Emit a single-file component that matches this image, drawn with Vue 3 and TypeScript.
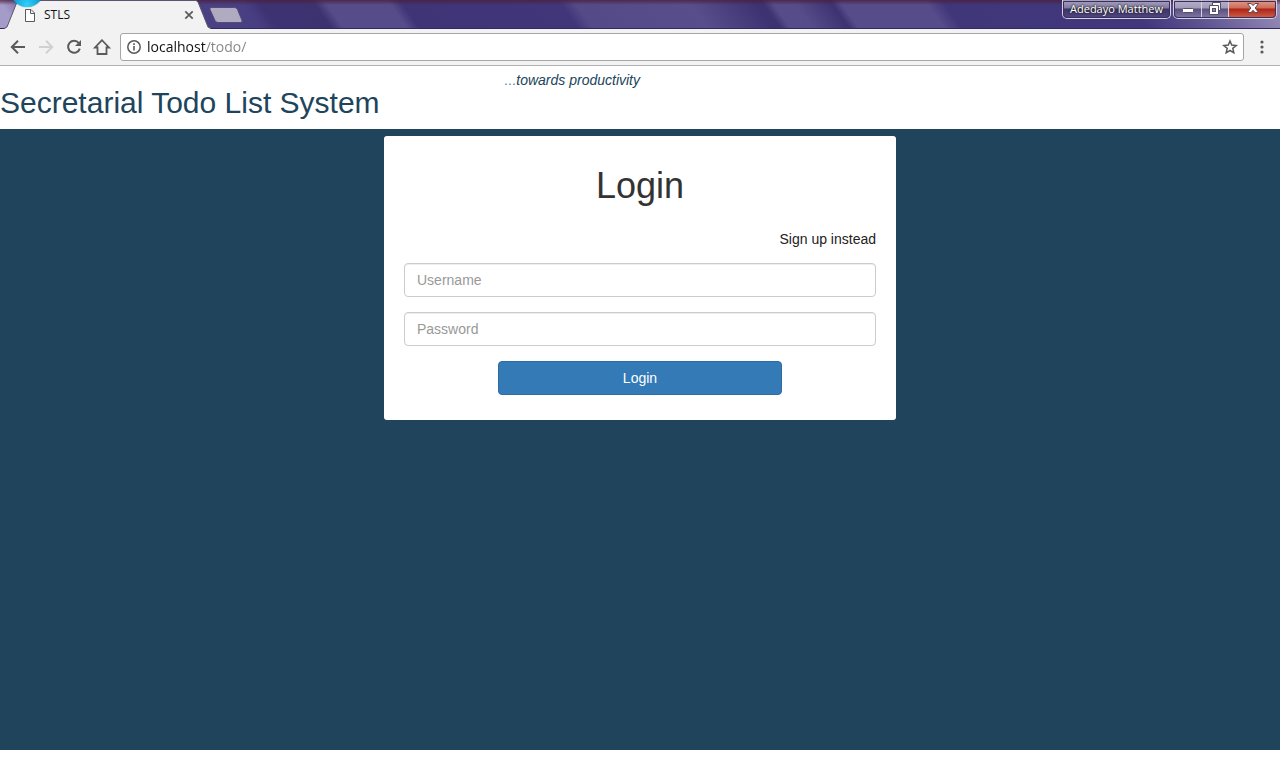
<script setup lang="ts">
import { ref } from 'vue'

const address = ref('localhost/todo/')
const username = ref('')
const password = ref('')
</script>

<template>
  <div class="window">
    <div class="titlebar">
      <div class="tab">
        <svg class="tab-shape" viewBox="0 0 208 29" preserveAspectRatio="none" aria-hidden="true">
          <path d="M0 29 L3 27 L13 2 L15 .5 H192 L194 2 L204 27 L207 29 Z" fill="#f2f2f2" />
          <path d="M0 28.500 L3 27 L13 2 L15 .5 H192 L194 2 L204 27 L207 28.500" fill="none" stroke="#5d5570" stroke-width="1" />
        </svg>
        <span class="orb"></span>
        <svg class="page-icon" width="12" height="15" viewBox="0 0 12 15" aria-hidden="true">
          <path d="M1.500 1.500 H7 L10.500 5 V13.500 H1.500 Z M6.500 1.500 V5.500 H10.500" fill="#fff" stroke="#5a5a5a" />
        </svg>
        <span class="tab-title">STLS</span>
        <button class="tab-close" type="button" aria-label="Close tab">
          <svg width="10" height="10" viewBox="0 0 10 10"><path d="M1.300 1.300 L8.700 8.700 M8.700 1.300 L1.300 8.700" stroke="#5a5a5a" stroke-width="1.700" /></svg>
        </button>
      </div>
      <button class="new-tab" type="button" aria-label="New tab">
        <svg width="34" height="17" viewBox="0 0 34 17">
          <path d="M2 .5 H25.500 Q27.500 .5 28.500 2.500 L33 13.500 Q33.500 15.500 31.500 15.500 H9 Q7 15.500 6 13.500 L1 2.500 Q.5 .5 2 .5Z" fill="#b0abc0" stroke="#554b79" />
        </svg>
      </button>
      <div class="window-controls">
        <button class="profile" type="button">Adedayo Matthew</button>
        <div class="control-group">
          <button class="control minimize" type="button" aria-label="Minimize">
            <svg width="14" height="14" viewBox="0 0 14 14"><rect x="1.500" y="6.500" width="11" height="4" rx="1" fill="#fff" stroke="#53506b" /></svg>
          </button>
          <button class="control restore" type="button" aria-label="Restore">
            <svg width="14" height="14" viewBox="0 0 14 14">
              <path d="M4.500 .5 H12.500 V8.500 H4.500 Z" fill="#fff" stroke="#53506b" />
              <path d="M1.500 3.500 H10.500 V12.500 H1.500 Z" fill="#fff" stroke="#53506b" />
              <rect x="4.500" y="6.500" width="3" height="3" fill="#8d87a8" stroke="#53506b" />
            </svg>
          </button>
          <button class="control close" type="button" aria-label="Close">
            <svg width="14" height="12" viewBox="0 0 14 12"><path d="M1.500 1.500 H5 L7 3.600 L9 1.500 H12.500 L9.200 6 L12.500 10.500 H9 L7 8.300 L5 10.500 H1.500 L4.800 6 Z" fill="#fff" stroke="#5b4a5a" /></svg>
          </button>
        </div>
      </div>
    </div>

    <div class="toolbar">
      <button class="tool" type="button" aria-label="Back">
        <svg width="20" height="20" viewBox="0 0 20 20"><path d="M17 10 H4.500 M10 3.800 L3.800 10 L10 16.200" fill="none" stroke="#5a5a5a" stroke-width="2" /></svg>
      </button>
      <button class="tool" type="button" aria-label="Forward" disabled>
        <svg width="20" height="20" viewBox="0 0 20 20"><path d="M3 10 H15.500 M10 3.800 L16.200 10 L10 16.200" fill="none" stroke="#d0d0d0" stroke-width="2" /></svg>
      </button>
      <button class="tool" type="button" aria-label="Reload">
        <svg width="20" height="20" viewBox="0 0 20 20">
          <path d="M14.800 6 A6 6 0 1 0 15.800 11.600" fill="none" stroke="#5a5a5a" stroke-width="2" />
          <path d="M17 3 V9 H11 Z" fill="#5a5a5a" />
        </svg>
      </button>
      <button class="tool" type="button" aria-label="Home">
        <svg width="20" height="20" viewBox="0 0 20 20"><path d="M10 3.200 L3 10.500 H5.500 V17 H14.500 V10.500 H17 Z" fill="none" stroke="#5a5a5a" stroke-width="1.800" /></svg>
      </button>
      <div class="omnibox">
        <svg width="16" height="16" viewBox="0 0 16 16" aria-hidden="true">
          <circle cx="8" cy="8" r="6.200" fill="none" stroke="#5a5a5a" stroke-width="1.500" />
          <path d="M8 7 V11.500 M8 4.300 V5.900" stroke="#5a5a5a" stroke-width="1.600" />
        </svg>
        <input v-model="address" class="address" type="text" aria-label="Address" spellcheck="false" />
        <button class="star" type="button" aria-label="Bookmark this page">
          <svg width="16" height="16" viewBox="0 0 16 16"><path d="M8 2 L9.700 6.100 L14.200 6.500 L10.800 9.400 L11.800 13.800 L8 11.500 L4.200 13.800 L5.200 9.400 L1.800 6.500 L6.300 6.100 Z" fill="none" stroke="#5a5a5a" stroke-width="1.500" /></svg>
        </button>
      </div>
      <button class="menu" type="button" aria-label="Menu">
        <svg width="4" height="14" viewBox="0 0 4 14" fill="#5a5a5a"><circle cx="2" cy="2" r="1.600" /><circle cx="2" cy="7" r="1.600" /><circle cx="2" cy="12" r="1.600" /></svg>
      </button>
    </div>

    <header class="site-header">
      <div class="brand">
        <h2>Secretarial Todo List System</h2>
        <em><span class="dots">...</span>towards productivity</em>
      </div>
    </header>

    <main>
      <form class="card" @submit.prevent>
        <h1>Login</h1>
        <a class="signup" href="#signup">Sign up instead</a>
        <input v-model="username" class="field" type="text" placeholder="Username" aria-label="Username" />
        <input v-model="password" class="field" type="password" placeholder="Password" aria-label="Password" />
        <button class="submit" type="submit">Login</button>
      </form>
    </main>
  </div>
</template>

<style>
body {
  margin: 0;
  background: #fff;
}
</style>

<style scoped>
.window {
  box-sizing: border-box;
  min-height: 100vh;
  padding-bottom: 20px;
  display: flex;
  flex-direction: column;
  font-family: "Liberation Sans", Arial, sans-serif;
  font-size: 14px;
  line-height: 20px;
  color: #333;
}

button,
input {
  box-sizing: border-box;
  margin: 0;
  padding: 0;
  border: 0;
  background: none;
  font: inherit;
  color: inherit;
}

button {
  display: flex;
  align-items: center;
  justify-content: center;
}

.titlebar {
  height: 29px;
  padding: 0 3px 0 4px;
  display: flex;
  align-items: flex-start;
  overflow: hidden;
  box-shadow: inset 0 -1px #332862;
  background:
    linear-gradient(rgba(75, 30, 55, 0.75), rgba(75, 30, 55, 0) 5px),
    linear-gradient(55deg, #a59bc8 0, #a59bc8 16px, #453a7e 50px, #4a4084 190px, #483e82 214px, #3d3373 228px,
      #3d3270 272px, #564c8a 282px, #564c8a 334px, #3f3476 344px, #41367a 474px, #544a88 486px, #584e8c 580px,
      #3d3372 634px, #3d3372 640px, #564c8a 648px, #564c8a 666px, #3d3372 696px, #564c8a 704px, #564c8a 774px,
      #40367a 788px, #42377c 940px, #5f5592 990px, #968cb8 1060px);
}

.tab {
  position: relative;
  box-sizing: border-box;
  width: 208px;
  height: 29px;
  padding: 1px 17px 0 20px;
  display: flex;
  align-items: center;
}

.tab-shape {
  position: absolute;
  inset: 0;
  width: 100%;
  height: 100%;
}

.orb {
  position: absolute;
  left: 6px;
  top: -27px;
  width: 34px;
  height: 34px;
  border-radius: 50%;
  background: radial-gradient(circle at 50% 92%, #2fd0fa 0, #16a8dc 30%, #0b5d8c 60%);
  box-shadow: 0 0 1px #17506c;
}

.page-icon,
.tab-title,
.tab-close {
  position: relative;
}

.tab-title {
  flex: 1;
  margin-left: 8px;
  font-family: "Open Sans", "Noto Sans", sans-serif;
  font-size: 12px;
  color: #111;
}

.tab-close {
  width: 12px;
  height: 16px;
}

.new-tab {
  margin: 7px 0 0 -3px;
}

.window-controls {
  margin-left: auto;
  display: flex;
  gap: 2px;
}

.profile,
.control-group {
  box-sizing: border-box;
  height: 19px;
  border: 1px solid #d5d0e2;
  border-top: 0;
  border-radius: 0 0 5px 5px;
  outline: 1px solid #37305c;
  outline-offset: -2px;
}

.profile {
  padding: 0 7px;
  background: linear-gradient(#aaa4c3 0, #817a9f 8px, #3c3465 9px, #514784 100%);
  font-family: "Open Sans", "Noto Sans", sans-serif;
  font-size: 11px;
  line-height: 16px;
  color: #fff;
  text-shadow: 0 0 2px #222, 0 0 2px #222;
}

.control-group {
  display: flex;
  overflow: hidden;
}

.control {
  width: 28px;
  height: 18px;
  border-right: 1px solid #d5d0e2;
  background: linear-gradient(#b9b3cb 0, #a19ab9 8px, #59507f 9px, #8178a5 100%);
}

.restore {
  width: 27px;
}

.close {
  width: 47px;
  padding-bottom: 2px;
  border-right: 0;
  background: linear-gradient(#dda194 0, #cf6a58 8px, #ae2417 9px, #d0604a 100%);
}

.toolbar {
  box-sizing: border-box;
  height: 37px;
  padding: 0 16px 0 4px;
  display: flex;
  align-items: center;
  border-bottom: 1px solid #b3b3b3;
  background: #f2f2f2;
}

.tool {
  width: 28px;
  height: 28px;
}

.omnibox {
  box-sizing: border-box;
  flex: 1;
  height: 28px;
  margin-left: 4px;
  padding: 0 5px;
  display: flex;
  align-items: center;
  border: 1px solid #a6a6a6;
  border-radius: 3px;
  background: #fff;
}

.address {
  flex: 1;
  min-width: 0;
  height: 20px;
  margin-left: 5px;
  font-family: "Open Sans", "Noto Sans", sans-serif;
  font-size: 14px;
  color: transparent;
  caret-color: #111;
  background: linear-gradient(90deg, #111 59px, #848484 59px);
  background-clip: text;
}

.menu {
  width: 4px;
  height: 20px;
  margin-left: 16px;
}

.site-header {
  background: #fff;
}

.brand {
  width: 50%;
  height: 63px;
  display: flex;
  align-items: flex-start;
  justify-content: space-between;
  color: #20445c;
}

h2 {
  margin: 20px 0 0;
  font-size: 30px;
  font-weight: 400;
  line-height: 33px;
  white-space: nowrap;
}

em {
  margin-top: 4px;
  white-space: nowrap;
}

.dots {
  color: #2f8fc4;
}

main {
  flex: 1;
  padding: 7px 0;
  background: #20445c;
}

.card {
  box-sizing: border-box;
  width: 40%;
  margin: 0 auto;
  padding: 30px 20px 25px;
  display: flex;
  flex-direction: column;
  border-radius: 3px;
  background: #fff;
}

h1 {
  margin: 0 0 23px;
  font-size: 36px;
  font-weight: 400;
  line-height: 40px;
  text-align: center;
}

.signup {
  align-self: flex-end;
  margin-bottom: 14px;
  color: #222;
  text-decoration: none;
}

.field {
  width: 100%;
  height: 34px;
  margin-bottom: 15px;
  padding: 6px 12px;
  border: 1px solid #ccc;
  border-radius: 4px;
  background: #fff;
  box-shadow: inset 0 1px 1px rgba(0, 0, 0, 0.075);
  color: #555;
}

.field::placeholder {
  color: #999;
  opacity: 1;
}

.submit {
  align-self: center;
  width: 60%;
  height: 34px;
  border: 1px solid #2e6da4;
  border-radius: 4px;
  background: #337ab7;
  color: #fff;
}
</style>
